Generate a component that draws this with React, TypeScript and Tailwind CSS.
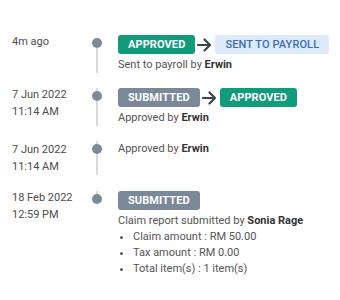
import type { ReactNode } from 'react'

type Tone = 'green' | 'gray' | 'blue'

function Badge({ tone, children }: { tone: Tone; children: ReactNode }) {
  const styles: Record<Tone, string> = {
    green: 'bg-[#129b7b] text-white font-bold',
    gray: 'bg-[#7a8898] text-white font-bold',
    blue: 'bg-[#dceafa] text-[#3d6db0] font-medium',
  }
  return (
    <span className={`inline-flex items-center h-[19px] px-[10px] rounded-[3px] text-[11px] leading-none tracking-[0.1px] ${styles[tone]}`}>
      {children}
    </span>
  )
}

function Arrow() {
  return (
    <svg width="15" height="14" viewBox="0 0 15 14" className="ml-[2px] mr-[3px] shrink-0">
      <path d="M1 7h12M7.5 1.5L13 7l-5.5 5.5" fill="none" stroke="#3f4448" strokeWidth="2.2" strokeLinecap="round" strokeLinejoin="round" />
    </svg>
  )
}

interface Entry {
  date: string
  time?: string
  badges?: { tone: Tone; label: string }[]
  text: ReactNode
  bullets?: string[]
  timeOffset?: string
}

const entries: Entry[] = [
  {
    date: '4m ago',
    badges: [
      { tone: 'green', label: 'APPROVED' },
      { tone: 'blue', label: 'SENT TO PAYROLL' },
    ],
    text: (
      <>
        Sent to payroll by <b className="font-bold text-[#333]">Erwin</b>
      </>
    ),
  },
  {
    date: '7 Jun 2022',
    time: '11:14 AM',
    badges: [
      { tone: 'gray', label: 'SUBMITTED' },
      { tone: 'green', label: 'APPROVED' },
    ],
    text: (
      <>
        Approved by <b className="font-bold text-[#333]">Erwin</b>
      </>
    ),
  },
  {
    date: '7 Jun 2022',
    time: '11:14 AM',
    text: (
      <>
        Approved by <b className="font-bold text-[#333]">Erwin</b>
      </>
    ),
    timeOffset: 'mt-0',
  },
  {
    date: '18 Feb 2022',
    time: '12:59 PM',
    badges: [{ tone: 'gray', label: 'SUBMITTED' }],
    text: (
      <>
        Claim report submitted by <b className="font-bold text-[#333]">Sonia Rage</b>
      </>
    ),
    bullets: ['Claim amount : RM 50.00', 'Tax amount : RM 0.00', 'Total item(s) : 1 item(s)'],
  },
]

export default function App() {
  return (
    <div className="w-[340px] h-[300px] bg-white pt-[35px] pl-[12px] font-['Roboto','Liberation_Sans',sans-serif] text-[11px] text-[#555]">
      {entries.map((e, i) => {
        const first = i === 0
        const last = i === entries.length - 1
        return (
          <div key={i} className={`flex ${last ? '' : i === 2 ? 'pb-[16px]' : 'pb-[15px]'}`}>
            <div className={`w-[78px] shrink-0 self-start leading-[17px] text-[#4d4d4d] ${e.timeOffset ?? '-mt-[2px]'}`}>
              <div>{e.date}</div>
              {e.time && <div>{e.time}</div>}
            </div>

            <div className="w-[14px] shrink-0 flex flex-col items-center">
              <div className={`w-[2px] h-[3px] ${first ? '' : 'bg-[#d6dade]'}`} />
              <div className="w-[10px] h-[10px] rounded-full bg-[#7d8a99] shrink-0" />
              {!last && <div className="w-[2px] flex-1 bg-[#d6dade]" />}
            </div>

            <div className="ml-[14px] self-start">
              {e.badges && (
                <div className="flex items-center">
                  {e.badges.map((b, j) => (
                    <span key={j} className="flex items-center">
                      {j > 0 && <Arrow />}
                      <Badge tone={b.tone}>{b.label}</Badge>
                    </span>
                  ))}
                </div>
              )}
              <div className={`leading-[16px] ${e.badges ? 'mt-[3px]' : ''}`}>{e.text}</div>
              {e.bullets && (
                <ul className="list-disc pl-[15px] leading-[16px]">
                  {e.bullets.map((b) => (
                    <li key={b}>{b}</li>
                  ))}
                </ul>
              )}
            </div>
          </div>
        )
      })}
    </div>
  )
}
